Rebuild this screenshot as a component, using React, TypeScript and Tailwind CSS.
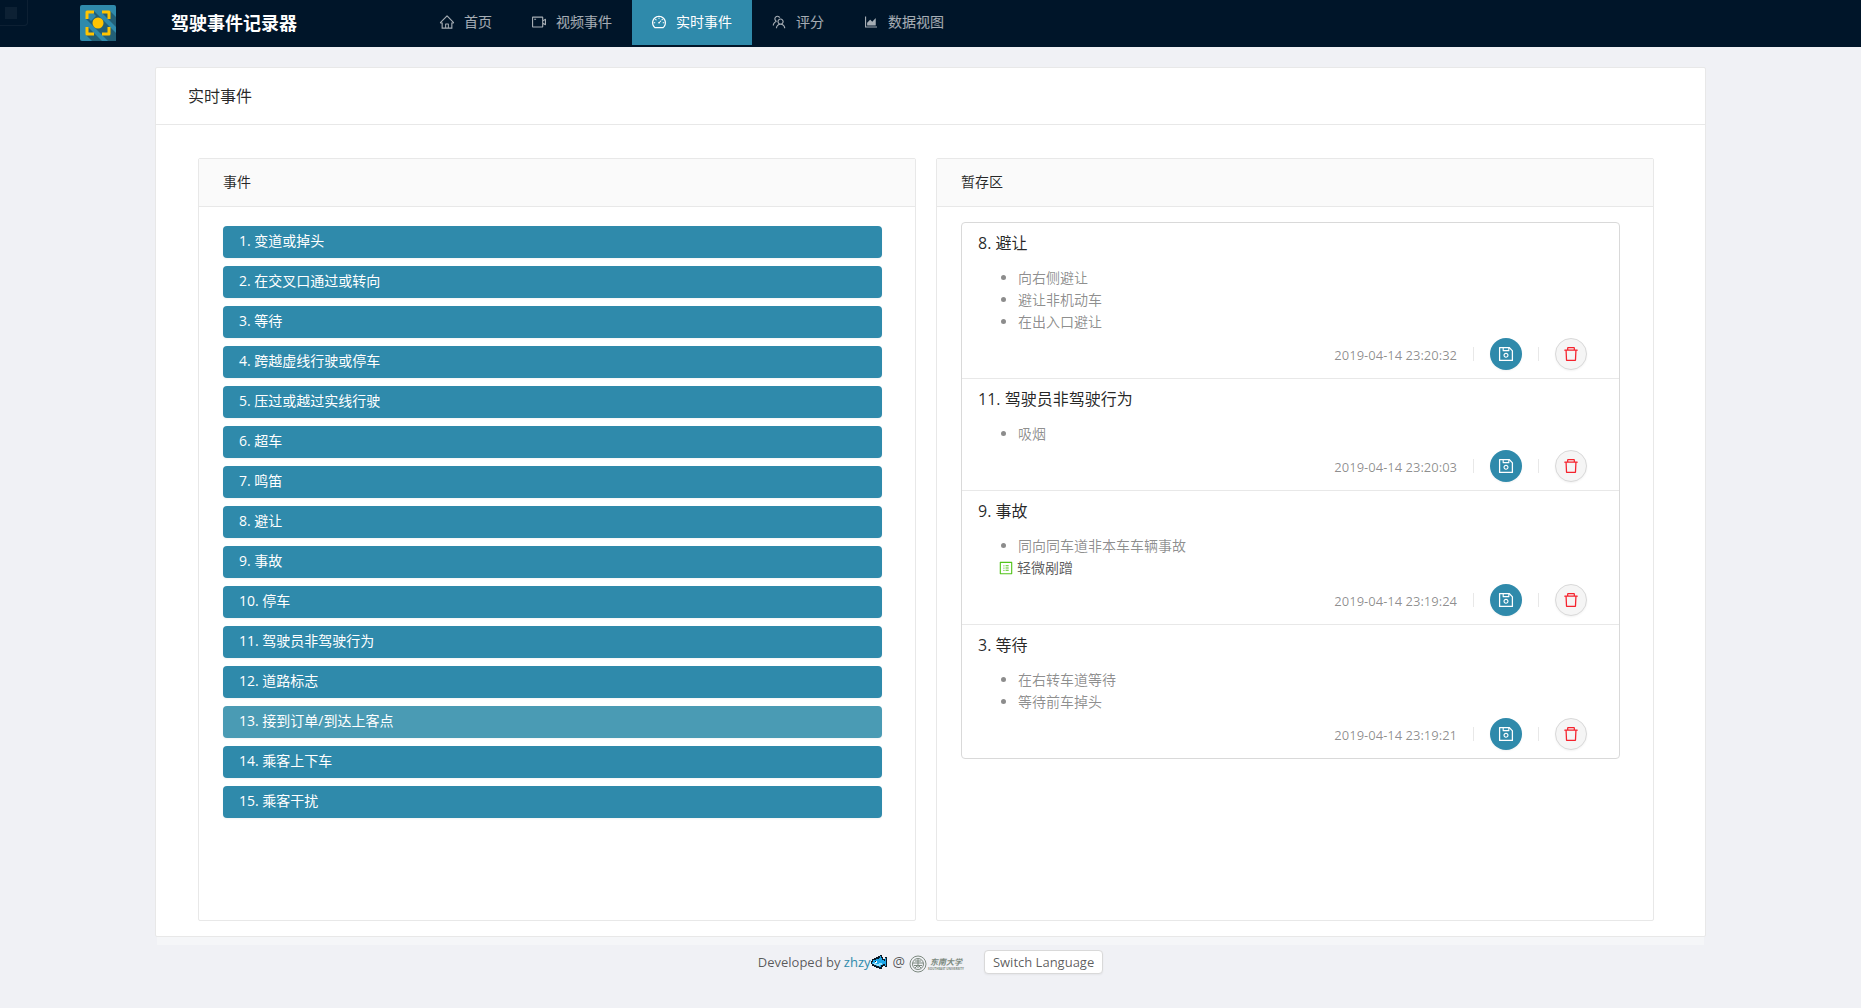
import React from "react";
import {
  AiOutlineHome,
  AiOutlineVideoCamera,
  AiOutlineDashboard,
  AiOutlineTeam,
  AiOutlineAreaChart,
  AiOutlineSave,
  AiOutlineDelete,
  AiOutlineProfile,
} from "react-icons/ai";

const navItems = [
  { label: "首页", Icon: AiOutlineHome, active: false },
  { label: "视频事件", Icon: AiOutlineVideoCamera, active: false },
  { label: "实时事件", Icon: AiOutlineDashboard, active: true },
  { label: "评分", Icon: AiOutlineTeam, active: false },
  { label: "数据视图", Icon: AiOutlineAreaChart, active: false },
];

const eventNames = [
  "变道或掉头",
  "在交叉口通过或转向",
  "等待",
  "跨越虚线行驶或停车",
  "压过或越过实线行驶",
  "超车",
  "鸣笛",
  "避让",
  "事故",
  "停车",
  "驾驶员非驾驶行为",
  "道路标志",
  "接到订单/到达上客点",
  "乘客上下车",
  "乘客干扰",
];

type Entry = { title: string; details: string[]; note?: string; time: string };

const entries: Entry[] = [
  { title: "8. 避让", details: ["向右侧避让", "避让非机动车", "在出入口避让"], time: "2019-04-14 23:20:32" },
  { title: "11. 驾驶员非驾驶行为", details: ["吸烟"], time: "2019-04-14 23:20:03" },
  { title: "9. 事故", details: ["同向同车道非本车车辆事故"], note: "轻微剐蹭", time: "2019-04-14 23:19:24" },
  { title: "3. 等待", details: ["在右转车道等待", "等待前车掉头"], time: "2019-04-14 23:19:21" },
];

function AppLogo() {
  return (
    <svg viewBox="0 0 36 36" className="h-9 w-9" aria-hidden="true">
      <rect width="36" height="36" rx="2" fill="#2f8aab" />
      <path d="M14 6L36 28V36H28L6 14V6Z" fill="#225f76" />
      <path d="M22 6H30L36 12V22L22 8Z" fill="#225f76" />
      <path d="M6 22V30L12 36H22L8 22Z" fill="#225f76" />
      <path d="M8 8H13L16 11L11 16L8 13Z" fill="#2f8aab" />
      <path d="M7 14V7H14M22 7H29V14M29 22V29H22M14 29H7V22" fill="none" stroke="#ffc400" strokeWidth="3" strokeLinejoin="round" />
      <circle cx="18" cy="18" r="5.5" fill="#ffc400" />
    </svg>
  );
}

function Fish() {
  return (
    <svg viewBox="0 0 16 14" className="h-3.5 w-4" shapeRendering="crispEdges" aria-hidden="true">
      <path
        d="M5 2H7V1H9V0H11V2H12V4H14V2H16V12H14V11H12V12H11V14H8V13H5V12H3V11H1V9H0V6H1V4H3V3H5Z"
        fill="#0b1a26"
      />
      <path d="M5 4H8V3H9V1H10V3H11V5H13V6H14V3H15V11H14V9H12V10H10V12H8V11H5V10H3V9H1V7H2V5H5Z" fill="#1ea7e8" />
      <path d="M2 8H5V9H8V8H11V10H9V11H6V10H3V9H2Z" fill="#8fe0ff" />
      <rect x="4" y="6" width="2" height="2" fill="#fff" />
      <rect x="4" y="6" width="1" height="1" fill="#0b1a26" />
    </svg>
  );
}

function UniversityMark() {
  return (
    <span className="flex items-center gap-px pt-1 text-[#7d8a80]">
      <svg viewBox="0 0 18 18" className="h-[18px] w-[18px]" fill="none" stroke="currentColor" aria-hidden="true">
        <circle cx="9" cy="9" r="8" />
        <circle cx="9" cy="9" r="5.5" />
        <path d="M4 8H14M5 10.5H13M9 4V13M6 13L9 10L12 13M6 6H12" />
      </svg>
      <span className="flex flex-col items-center">
        <span className="text-[8px] leading-[10px] font-bold italic">东南大学</span>
        <span className="text-[3px] leading-[4px] font-bold">SOUTHEAST UNIVERSITY</span>
      </span>
    </span>
  );
}

function Divider() {
  return <span className="mx-4 h-3.5 w-px bg-[#e8e8e8]" />;
}

function StashedEntry({ entry }: { entry: Entry }) {
  return (
    <li className="border-b border-[#e8e8e8] px-4 py-2 last:border-b-0">
      <h3 className="text-base leading-6 text-black/85">{entry.title}</h3>
      <ul className="mt-3 list-disc pl-10 text-sm leading-[22px] text-black/45">
        {entry.details.map((detail) => (
          <li key={detail}>{detail}</li>
        ))}
      </ul>
      {entry.note && (
        <p className="flex items-center gap-[3px] pl-5 text-sm leading-[22px] text-black/65">
          <AiOutlineProfile className="text-base text-[#52c41a]" />
          {entry.note}
        </p>
      )}
      <div className="mt-[5px] flex items-center justify-end pr-4">
        <time className="pt-0.5 text-[13px] text-black/45">{entry.time}</time>
        <Divider />
        <button
          type="button"
          aria-label="保存"
          className="flex h-8 w-8 items-center justify-center rounded-full bg-[#2f8aab] text-lg text-white shadow-xs"
        >
          <AiOutlineSave />
        </button>
        <Divider />
        <button
          type="button"
          aria-label="删除"
          className="flex h-8 w-8 items-center justify-center rounded-full border border-[#d9d9d9] bg-[#f5f5f5] text-lg text-[#f5222d] shadow-xs"
        >
          <AiOutlineDelete />
        </button>
      </div>
    </li>
  );
}

function Panel({ title, children }: { title: string; children: React.ReactNode }) {
  return (
    <section className="min-w-0 flex-1 rounded-xs border border-[#e8e8e8] bg-white">
      <h2 className="border-b border-[#e8e8e8] bg-[#fafafa] px-6 pt-[11px] pb-[13px] text-sm leading-[23px] text-black/85">
        {title}
      </h2>
      {children}
    </section>
  );
}

export default function App() {
  return (
    <div className="flex min-h-screen flex-col bg-[#f0f1f5] font-['Open_Sans','Noto_Sans_CJK_SC',sans-serif] text-sm text-black/65">
      <header className="relative flex h-[47px] items-start bg-[#001529] pl-20">
        <span className="absolute top-0 left-0 flex h-[26px] w-7 items-center justify-center rounded-br border-r border-b border-white/5 pr-1.5">
          <span className="h-3 w-3 bg-white/5" />
        </span>
        <div className="pt-[5px]">
          <AppLogo />
        </div>
        <h1 className="ml-[55px] w-[249px] text-lg leading-[47px] font-bold text-white">驾驶事件记录器</h1>
        <nav className="flex">
          {navItems.map(({ label, Icon, active }) => (
            <a
              key={label}
              href="#"
              className={
                active
                  ? "flex h-[45px] items-center gap-[9px] bg-[#2f8aab] pr-5 pb-0.5 pl-[19px] text-white"
                  : "flex h-[45px] items-center gap-[9px] pr-5 pb-0.5 pl-[19px] text-white/65"
              }
            >
              <Icon className="text-base" />
              {label}
            </a>
          ))}
        </nav>
      </header>

      <main className="mx-[155px] mt-5 rounded-xs border border-[#e8e8e8] bg-white">
        <h2 className="border-b border-[#e8e8e8] px-8 py-4 text-base leading-6 text-black/85">实时事件</h2>
        <div className="flex gap-5 pt-[33px] pr-[51px] pb-[15px] pl-[42px]">
          <Panel title="事件">
            <div className="flex flex-col gap-2 pt-[19px] pr-[33px] pb-[102px] pl-6">
              {eventNames.map((name, i) => (
                <button
                  key={name}
                  type="button"
                  className={
                    i === 12
                      ? "h-8 rounded bg-[#4a9bb4] px-4 pb-0.5 text-left text-white shadow-xs"
                      : "h-8 rounded bg-[#2f8aab] px-4 pb-0.5 text-left text-white shadow-xs"
                  }
                >
                  {i + 1}. {name}
                </button>
              ))}
            </div>
          </Panel>
          <Panel title="暂存区">
            <div className="pt-[15px] pr-[33px] pl-6">
              <ul className="rounded border border-[#d9d9d9]">
                {entries.map((entry) => (
                  <StashedEntry key={entry.time} entry={entry} />
                ))}
              </ul>
            </div>
          </Panel>
        </div>
      </main>
      <div className="mx-[157px] h-2 bg-[#f5f6f8]" />

      <footer className="flex items-center justify-center pt-[5px]">
        <span className="text-[13px]">
          Developed by{" "}
          <a href="#" className="text-[#2f8aab]">
            zhzy
          </a>
        </span>
        <Fish />
        <span className="mr-1 ml-1.5 text-sm">@</span>
        <UniversityMark />
        <button
          type="button"
          className="ml-5 h-6 rounded border border-[#d9d9d9] bg-white px-2 text-[13px] leading-none shadow-xs"
        >
          Switch Language
        </button>
      </footer>
    </div>
  );
}
